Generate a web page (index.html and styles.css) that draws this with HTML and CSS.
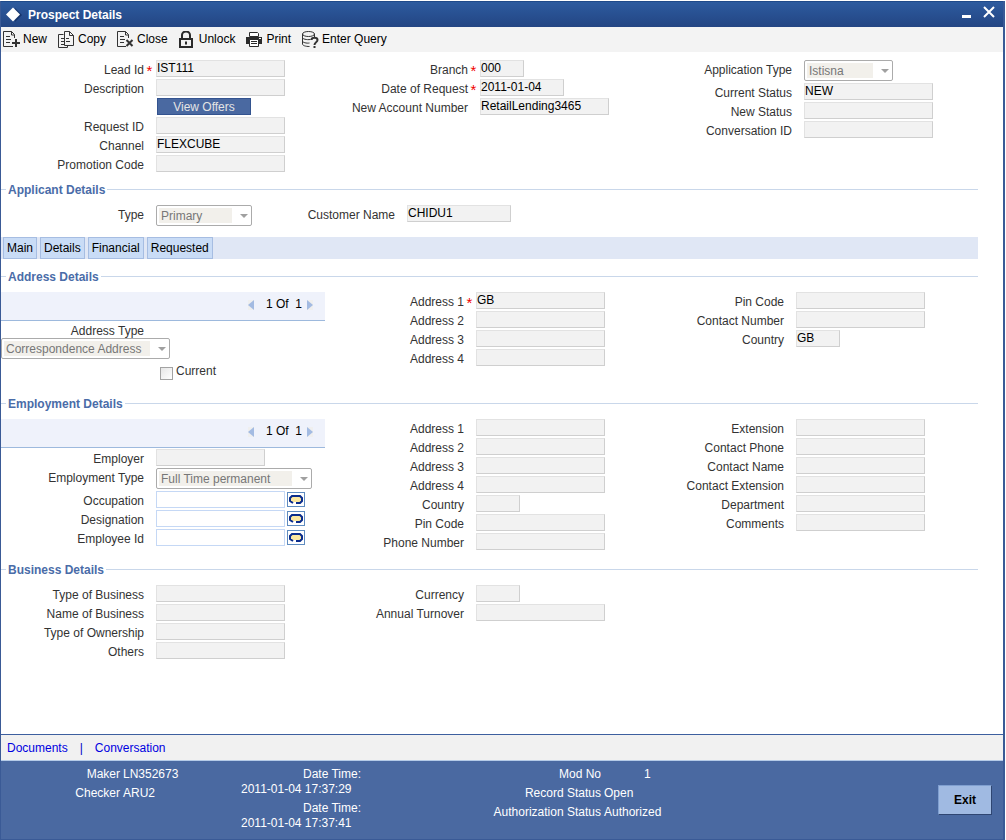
FILE: index.html
```html
<!DOCTYPE html>
<html lang="en">
<head>
  <meta charset="UTF-8">
  <title>Prospect Details</title>
  <meta name="viewport" content="width=device-width, initial-scale=1.0">
  <link rel="stylesheet" href="styles.css">
</head>
<body>

  <div class="window">

    <header class="titlebar">
      <svg class="logo" width="18" height="18" viewBox="0 0 18 18"><path d="M10 2l7 7-7 7" fill="#16356c"/><path d="M8 1.500l7 7-7 7-7-7z" fill="#fff"/></svg>
      <h1>Prospect Details</h1>
      <button class="win-btn" type="button" aria-label="Minimize"><svg width="12" height="14" viewBox="0 0 12 14"><rect x="1" y="9" width="9" height="3" fill="#fff"/></svg></button>
      <button class="win-btn" type="button" aria-label="Close window"><svg width="12" height="14" viewBox="0 0 12 14"><path d="M1 1l10 10M11 1L1 11" stroke="#fff" stroke-width="2"/></svg></button>
    </header>

    <nav class="toolbar">
      <button type="button">
        <svg width="17" height="18" viewBox="0 0 17 18" fill="none" stroke="#333"><path d="M10 15.500H.5V.5h8l3 3V7M8.500 .5v3.500h3M3 5.500h4M3 8.500h5M3 11.500h4"/><path d="M13 8v8M9 12h8" stroke-width="2"/></svg>
        New
      </button>
      <button type="button">
        <svg width="17" height="18" viewBox="0 0 17 18" fill="none" stroke="#333"><path d="M5.500 3.500H.5v13h9v-2M3 7.500h3M3 10.500h3M3 13.500h4"/><path d="M11.500 .5h-5v14h9v-10zM11.500 .5v4h4M8 7.500h3M8 10.500h4"/></svg>
        Copy
      </button>
      <button type="button">
        <svg width="17" height="18" viewBox="0 0 17 18" fill="none" stroke="#333"><path d="M9 15.500H.5V.5h8l3 3V7M8.500 .5v3.500h3M3 5.500h4M3 8.500h5M3 11.500h4"/><path d="M9.500 9l6 6M15.500 9l-6 6" stroke-width="2"/></svg>
        Close
      </button>
      <button type="button">
        <svg width="17" height="18" viewBox="0 0 17 18" fill="none" stroke="#2b2b2b" stroke-width="2"><path d="M1 8h12v8H1zM3 8V4a4 3.500 0 0 1 8 0v4"/><path d="M7 10.500v3"/></svg>
        Unlock
      </button>
      <button type="button">
        <svg width="17" height="18" viewBox="0 0 17 18"><path d="M3.500 1.500h8l1 1v3h-9z" fill="#fff" stroke="#2b2b2b"/><path d="M0 6h16v7H0z" fill="#2b2b2b"/><path d="M3.500 8.500h9v7h-9z" fill="#fff" stroke="#2b2b2b"/><path d="M5 10.500h6M5 12.500h6" stroke="#2b2b2b"/><path d="M13 7.500h2" stroke="#fff"/></svg>
        Print
      </button>
      <button type="button">
        <svg width="17" height="18" viewBox="0 0 17 18" fill="none" stroke="#333"><ellipse cx="6.500" cy="3" rx="6" ry="2.500"/><path d="M.5 3v10c0 1.500 3 2.500 7 2.500M12.500 3v3M.5 6.500c0 1.500 4 2.500 8 2M.5 10c0 1.500 4 2.500 7 2"/><path d="M9.500 9c0-3 6-3 6 0 0 2.500-3 2-3 5M12.500 15v2" stroke-width="2"/></svg>
        Enter Query
      </button>
    </nav>

    <main class="content">

      <section class="columns">
        <div>
          <div class="row"><label class="required" for="leadId">Lead Id</label><input id="leadId" type="text" value="IST111" readonly></div>
          <div class="row"><label for="description">Description</label><input id="description" type="text" readonly></div>
          <div class="row"><button class="offers" type="button">View Offers</button></div>
          <div class="row"><label for="requestId">Request ID</label><input id="requestId" type="text" readonly></div>
          <div class="row"><label for="channel">Channel</label><input id="channel" type="text" value="FLEXCUBE" readonly></div>
          <div class="row"><label for="promoCode">Promotion Code</label><input id="promoCode" type="text" readonly></div>
        </div>
        <div>
          <div class="row"><label class="required" for="branch">Branch</label><input id="branch" class="short" type="text" value="000" readonly></div>
          <div class="row"><label class="required" for="requestDate">Date of Request</label><input id="requestDate" class="date" type="text" value="2011-01-04" readonly></div>
          <div class="row"><label for="accountNo">New Account Number</label><input id="accountNo" type="text" value="RetailLending3465" readonly></div>
        </div>
        <div>
          <div class="row row-select"><label for="appType">Application Type</label><span class="select app-type"><select id="appType" disabled><option>Istisna</option></select></span></div>
          <div class="row"><label for="currentStatus">Current Status</label><input id="currentStatus" type="text" value="NEW" readonly></div>
          <div class="row"><label for="newStatus">New Status</label><input id="newStatus" type="text" readonly></div>
          <div class="row"><label for="conversationId">Conversation ID</label><input id="conversationId" type="text" readonly></div>
        </div>
      </section>

      <fieldset>
        <legend>Applicant Details</legend>
        <div class="applicant">
          <div class="row row-center"><label for="type">Type</label><span class="select primary"><select id="type" disabled><option>Primary</option></select></span></div>
          <div class="row"><label for="customerName">Customer Name</label><input id="customerName" class="name" type="text" value="CHIDU1" readonly></div>
        </div>
      </fieldset>

      <nav class="tabs">
        <button type="button">Main</button>
        <button type="button">Details</button>
        <button type="button">Financial</button>
        <button type="button">Requested</button>
      </nav>

      <fieldset>
        <legend>Address Details</legend>
        <div class="columns detail">
          <div>
            <div class="pager">
              <button class="prev" type="button" aria-label="Previous address"></button>
              <span>1 Of&nbsp; 1</span>
              <button class="next" type="button" aria-label="Next address"></button>
            </div>
            <div class="stacked">
              <label for="addressType">Address Type</label>
              <span class="select address-type"><select id="addressType" disabled><option>Correspondence Address</option></select></span>
            </div>
            <div class="check"><input id="current" type="checkbox" disabled><label for="current">Current</label></div>
          </div>
          <div>
            <div class="row"><label class="required" for="address1">Address 1</label><input id="address1" type="text" value="GB" readonly></div>
            <div class="row"><label for="address2">Address 2</label><input id="address2" type="text" readonly></div>
            <div class="row"><label for="address3">Address 3</label><input id="address3" type="text" readonly></div>
            <div class="row"><label for="address4">Address 4</label><input id="address4" type="text" readonly></div>
          </div>
          <div>
            <div class="row"><label for="pinCode">Pin Code</label><input id="pinCode" type="text" readonly></div>
            <div class="row"><label for="contactNo">Contact Number</label><input id="contactNo" type="text" readonly></div>
            <div class="row"><label for="country">Country</label><input id="country" class="short" type="text" value="GB" readonly></div>
          </div>
        </div>
      </fieldset>

      <fieldset>
        <legend>Employment Details</legend>
        <div class="columns detail">
          <div>
            <div class="pager">
              <button class="prev" type="button" aria-label="Previous employment"></button>
              <span>1 Of&nbsp; 1</span>
              <button class="next" type="button" aria-label="Next employment"></button>
            </div>
            <div class="row"><label for="employer">Employer</label><input id="employer" class="medium" type="text" readonly></div>
            <div class="row row-select"><label for="empType">Employment Type</label><span class="select emp-type"><select id="empType" disabled><option>Full Time permanent</option></select></span></div>
            <div class="row">
              <label for="occupation">Occupation</label><input id="occupation" type="text">
              <button class="lov" type="button" aria-label="Find occupation"><svg width="16" height="13" viewBox="0 0 16 13"><rect x="3" y="3" width="10" height="6" fill="#fbe7a0"/><path d="M5 10L2 8V5l2-2h8l2 2v3l-2 2H8" fill="none" stroke="#0a2c8c" stroke-width="2"/></svg></button>
            </div>
            <div class="row">
              <label for="designation">Designation</label><input id="designation" type="text">
              <button class="lov" type="button" aria-label="Find designation"><svg width="16" height="13" viewBox="0 0 16 13"><rect x="3" y="3" width="10" height="6" fill="#fbe7a0"/><path d="M5 10L2 8V5l2-2h8l2 2v3l-2 2H8" fill="none" stroke="#0a2c8c" stroke-width="2"/></svg></button>
            </div>
            <div class="row">
              <label for="employeeId">Employee Id</label><input id="employeeId" type="text">
              <button class="lov" type="button" aria-label="Find employee"><svg width="16" height="13" viewBox="0 0 16 13"><rect x="3" y="3" width="10" height="6" fill="#fbe7a0"/><path d="M5 10L2 8V5l2-2h8l2 2v3l-2 2H8" fill="none" stroke="#0a2c8c" stroke-width="2"/></svg></button>
            </div>
          </div>
          <div>
            <div class="row"><label for="empAddress1">Address 1</label><input id="empAddress1" type="text" readonly></div>
            <div class="row"><label for="empAddress2">Address 2</label><input id="empAddress2" type="text" readonly></div>
            <div class="row"><label for="empAddress3">Address 3</label><input id="empAddress3" type="text" readonly></div>
            <div class="row"><label for="empAddress4">Address 4</label><input id="empAddress4" type="text" readonly></div>
            <div class="row"><label for="empCountry">Country</label><input id="empCountry" class="short" type="text" readonly></div>
            <div class="row"><label for="empPin">Pin Code</label><input id="empPin" type="text" readonly></div>
            <div class="row"><label for="empPhone">Phone Number</label><input id="empPhone" type="text" readonly></div>
          </div>
          <div>
            <div class="row"><label for="extension">Extension</label><input id="extension" type="text" readonly></div>
            <div class="row"><label for="contactPhone">Contact Phone</label><input id="contactPhone" type="text" readonly></div>
            <div class="row"><label for="contactName">Contact Name</label><input id="contactName" type="text" readonly></div>
            <div class="row"><label for="contactExt">Contact Extension</label><input id="contactExt" type="text" readonly></div>
            <div class="row"><label for="department">Department</label><input id="department" type="text" readonly></div>
            <div class="row"><label for="comments">Comments</label><input id="comments" type="text" readonly></div>
          </div>
        </div>
      </fieldset>

      <fieldset>
        <legend>Business Details</legend>
        <div class="columns detail">
          <div>
            <div class="row"><label for="businessType">Type of Business</label><input id="businessType" type="text" readonly></div>
            <div class="row"><label for="businessName">Name of Business</label><input id="businessName" type="text" readonly></div>
            <div class="row"><label for="ownership">Type of Ownership</label><input id="ownership" type="text" readonly></div>
            <div class="row"><label for="others">Others</label><input id="others" type="text" readonly></div>
          </div>
          <div>
            <div class="row"><label for="currency">Currency</label><input id="currency" class="short" type="text" readonly></div>
            <div class="row"><label for="turnover">Annual Turnover</label><input id="turnover" type="text" readonly></div>
          </div>
        </div>
      </fieldset>

    </main>

    <nav class="links">
      <a href="#documents">Documents</a>
      <span>|</span>
      <a href="#conversation">Conversation</a>
    </nav>

    <footer class="audit">
      <dl class="users">
        <dt>Maker</dt><dd>LN352673</dd>
        <dt>Checker</dt><dd>ARU2</dd>
      </dl>
      <dl class="dates">
        <dt>Date Time:</dt><dd>2011-01-04 17:37:29</dd>
        <dt>Date Time:</dt><dd>2011-01-04 17:37:41</dd>
      </dl>
      <dl class="status">
        <dt>Mod No</dt><dd class="mod">1</dd>
        <dt>Record Status</dt><dd>Open</dd>
        <dt>Authorization Status</dt><dd>Authorized</dd>
      </dl>
      <button class="exit" type="button">Exit</button>
    </footer>

  </div>

</body>
</html>
```
FILE: styles.css
```css
* {
  box-sizing: border-box;
}

body {
  margin: 0;
  padding: 1px 1px 0 0;
  background: #fff;
  font-family: "Liberation Sans", Arial, sans-serif;
  font-size: 12px;
  line-height: 19px;
  color: #333;
}

button, input, select {
  font: inherit;
  margin: 0;
  padding: 0;
}

.window {
  display: flex;
  flex-direction: column;
  min-height: calc(100vh - 1px);
  border: solid #3a5a96;
  border-width: 0 2px 1px 1px;
}

/* title bar */
.titlebar {
  display: flex;
  align-items: center;
  height: 26px;
  padding: 0 8px 0 4px;
  background: linear-gradient(#2d5b9f, #234583);
  border-top: 1px solid #1f4a8a;
}

.titlebar h1 {
  flex: 1;
  margin: 0 0 0 5px;
  font-size: 12px;
  line-height: 20px;
  color: #fff;
}

.win-btn {
  height: 20px;
  margin: 0 0 4px 10px;
  border: none;
  background: none;
  line-height: 0;
}

/* toolbar */
.toolbar {
  display: flex;
  gap: 11px;
  height: 25px;
  padding: 0 2px;
  background: #f3f3f3;
}

.toolbar button {
  display: flex;
  align-items: center;
  gap: 3px;
  border: none;
  background: none;
  color: #000;
}

/* form */
.content {
  flex: 1;
  padding: 8px 25px 8px 0;
}

.columns {
  display: grid;
  grid-template-columns: repeat(3, 1fr);
  padding-right: 5px;
  margin-bottom: 7px;
}

.columns.detail {
  padding-right: 17px;
  margin-bottom: 9px;
}

.row {
  display: flex;
  align-items: flex-start;
  height: 19px;
}

.row-select {
  height: 23px;
}

.row-center {
  align-items: center;
  height: 21px;
}

.row label {
  width: 155px;
  padding-right: 12px;
  line-height: 21px;
  text-align: right;
  white-space: nowrap;
}

.row label.required {
  padding-right: 1px;
}

.required::after {
  content: "*";
  display: inline-block;
  width: 11px;
  font-size: 15px;
  line-height: 10px;
  vertical-align: -2px;
  text-align: center;
  color: #f00000;
}

input[type="text"] {
  width: 129px;
  height: 17px;
  border: 1px solid #c5d8f5;
  background: #fff;
  color: #000;
}

input[readonly] {
  border-color: #e2e2e2 #cfcfcf #cfcfcf #e2e2e2;
  background: #f2f2f2;
}

.row input.short {
  width: 44px;
}

.row input.date {
  width: 84px;
}

.row input.name {
  width: 104px;
}

.row input.medium {
  width: 109px;
}

.offers {
  width: 94px;
  height: 17px;
  margin-left: 156px;
  padding-top: 2px;
  border: 1px solid #33538f;
  background: #4a69a1;
  color: #e4e4e4;
  line-height: 13px;
}

.select {
  position: relative;
  display: block;
}

.select::after {
  content: "";
  position: absolute;
  top: 9px;
  right: 4px;
  border: 4px solid transparent;
  border-top-color: #a0a0a0;
  border-bottom: none;
}

.select select {
  display: block;
  width: 100%;
  height: 21px;
  padding: 1px 0 0 4px;
  border: 1px solid #ababab;
  border-radius: 2px;
  appearance: none;
  background: linear-gradient(#f2f0eb, #f2f0eb) 2px center / calc(100% - 21px) 15px no-repeat #fff;
  color: #777;
  opacity: 1;
}

.app-type {
  width: 89px;
}

.primary {
  width: 96px;
}

.emp-type {
  width: 156px;
}

.address-type {
  width: 169px;
}

fieldset {
  min-width: 0;
  margin: 0;
  padding: 8px 0 0;
  border: none;
  border-top: 1px solid #c9d7ea;
}

legend {
  height: 16px;
  margin-left: 5px;
  padding: 0 2px;
  line-height: 18px;
  font-weight: bold;
  color: #4a6ca8;
}

.applicant {
  display: flex;
  margin-bottom: 11px;
}

.tabs {
  display: flex;
  gap: 3px;
  height: 22px;
  margin-bottom: 9px;
  padding-left: 2px;
  background: #e0e7f5;
}

.tabs button {
  padding: 1px 3px 0;
  border: 1px solid #a6bde2;
  background: #c9dcf6;
  color: #000;
}

.pager {
  display: flex;
  align-items: center;
  justify-content: flex-end;
  height: 29px;
  margin: 0 -4px 1px 0;
  padding: 0 12px 3px 0;
  border-bottom: 1px solid #9db9dd;
  background: #eff2fb;
  color: #000;
}

.pager button {
  width: 0;
  height: 0;
  border: 5px solid transparent;
}

.pager .prev {
  margin-right: 12px;
  border-right: 6px solid #a3bbe2;
  border-left: none;
}

.pager .next {
  margin-left: 5px;
  border-left: 6px solid #a3bbe2;
  border-right: none;
}

.stacked label {
  display: block;
  width: 143px;
  height: 16px;
  line-height: 18px;
  text-align: right;
}

.check {
  display: flex;
  align-items: flex-start;
  height: 27px;
  padding: 2px 0 0 159px;
}

.check label {
  line-height: 21px;
}

.check input {
  width: 13px;
  height: 13px;
  margin: 6px 3px 0 0;
  border: 1px solid #a3a3a3;
  appearance: none;
  background: linear-gradient(135deg, #e6e6e6, #fff);
}

.lov {
  width: 18px;
  height: 15px;
  margin: 1px 0 0 2px;
  border: 1px solid #5f8cc0;
  background: #fff;
  line-height: 0;
}

.lov svg {
  display: block;
}

/* bottom */
.links {
  display: flex;
  gap: 12px;
  align-items: center;
  height: 27px;
  padding: 2px 0 0 6px;
  border-top: 1px solid #3d5f9f;
  border-bottom: 1px solid #b5cbe8;
  background: #f1f1f1;
  color: #0000c8;
}

.links a {
  color: #0000e0;
  text-decoration: none;
}

.audit {
  display: flex;
  height: 78px;
  padding: 4px 11px 0 0;
  background: #4a69a1;
  color: #fff;
}

.audit dl, .audit dd {
  margin: 0;
}

.users, .status {
  display: grid;
  gap: 0 3px;
  align-content: start;
}

.users dt, .status dt {
  text-align: right;
}

.users {
  grid-template-columns: 119px 1fr;
  width: 240px;
}

.dates {
  width: 120px;
  line-height: 15px;
}

.dates dt {
  padding-top: 2px;
  text-align: right;
}

.dates dd {
  padding-bottom: 2px;
}

.status {
  grid-template-columns: 240px 1fr;
}

.status .mod {
  padding-left: 40px;
}

.exit {
  width: 54px;
  height: 30px;
  margin: 20px 0 0 auto;
  border: 1px solid #7f9fd0;
  border-right-color: #2f4672;
  border-bottom-color: #2f4672;
  background: #a0bae2;
  color: #000;
  font-weight: bold;
}
```
